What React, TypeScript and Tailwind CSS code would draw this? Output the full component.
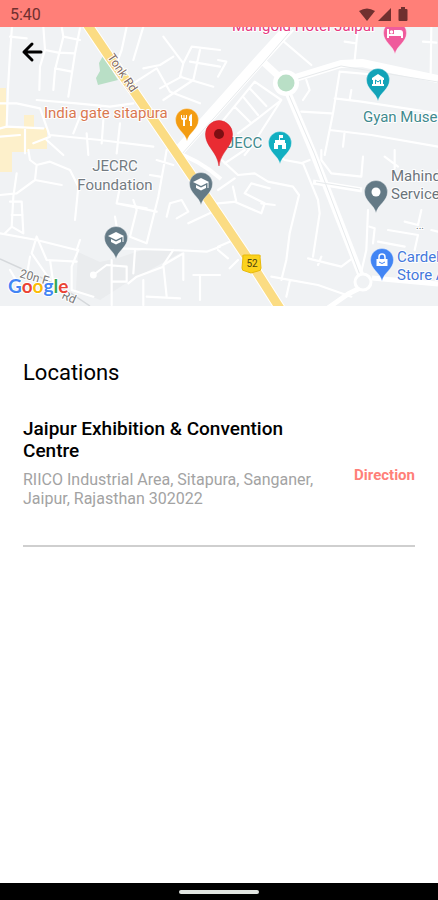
import type { ReactNode } from "react";

const FONT = "font-[Roboto,'Liberation_Sans',sans-serif]";

function StatusBar() {
  return (
    <header className="flex h-[27px] items-center justify-between bg-[#ff7f78] pt-0.5 pr-[29px] pl-[10px] text-[#70302f]">
      <span className="text-base leading-5">5:40</span>
      <svg className="h-4 w-[50px]" viewBox="0 0 50 16" fill="#70302f" aria-hidden="true">
        <path d="M0 4Q8-1 16 4L8 14Z" />
        <path d="M32 1V14H19Z" />
        <path d="M42 0h4v2h1.500q1 0 1 1v10q0 1-1 1h-7q-1 0-1-1V3q0-1 1-1H42z" />
      </svg>
    </header>
  );
}

function Pin({ x, y, color, children }: { x: number; y: number; color: string; children?: ReactNode }) {
  return (
    <g transform={`translate(${x} ${y})`}>
      <path
        d="M0 21C-1.500 13-11.500 9-11.500 0A11.500 11.500 0 1 1 11.500 0C11.500 9 1.500 13 0 21Z"
        fill={color}
        stroke="#fff"
        strokeOpacity=".5"
        strokeWidth=".7"
      />
      {children}
    </g>
  );
}

function Cap() {
  return (
    <path d="M-8-2 0-6 8-2 0 2ZM-5 1 0 3.500 5 1V4L0 6.500-5 4ZM6.500-2H7.500V4H6.500Z" fill="#fff" />
  );
}

function MapView() {
  return (
    <svg
      className="block h-[279px] w-full"
      viewBox="0 27 438 279"
      preserveAspectRatio="xMidYMid slice"
      role="img"
      aria-label="Map of Sitapura, Jaipur"
      fontFamily="Roboto, 'Liberation Sans', sans-serif"
    >
      <rect y="27" width="438" height="279" fill="#f0f2f4" />
      <path d="M0 88H6V128H24V115H34V128H47V149H28V152H12V172H0Z" fill="#fdf0cb" />
      <path d="M78 252 100 262 118 258 148 248 182 252 150 270 134 278 100 300 76 290Z" fill="#eaecee" />
      <path d="M103 56 118 80 98 85 96 78 100 71 99 63Z" fill="#b9dfc6" />

      <g fill="none" stroke="#fff" strokeWidth="6.500" strokeLinejoin="round" strokeLinecap="round">
        <g transform="scale(.33333)">
          <path d="M36 80 30 160 24 265 20 380 0 385M30 110 80 115M130 80 135 150 120 200 118 270M135 150 175 158 225 160M185 80 190 110 165 210 160 270M190 110 240 120M165 205 215 215M240 85 225 160 205 290M110 300 230 310 330 320 400 310M380 80 365 150 350 190M430 80 400 180" />
          <path d="M400 250 470 205 510 275 600 310M430 205 480 195 520 170M490 110 550 190 575 140 660 150M550 190 540 230 640 260M600 150 580 240 490 300M570 185 660 200M545 230 480 265" />
          <path d="M0 310 50 310 120 325 150 410 100 430M20 380 130 385M75 385 75 460M150 405 300 420 460 440M240 350 220 400M310 360 305 430M360 370 350 460M140 420 190 465M260 400 265 465M0 410 60 405" />
        </g>
        <g transform="translate(218 0) scale(.33333)">
          <path d="M180 110 280 195M420 80 410 180M380 125 415 130M640 80 638 220M615 125 655 128M0 180 25 185 0 230M0 380 110 245 190 300 100 370 60 400M50 320 100 370M75 290 120 345M95 265 145 318M265 240 275 270 255 300M365 215 345 340 320 465M365 215 480 225M350 295 430 305 660 340M400 270 395 300M250 335 340 340M335 390 460 405 660 440M380 395 375 440M190 300 100 440 80 465" />
        </g>
        <g transform="translate(0 150) scale(.33333)">
          <path d="M85 0 90 30 110 45 105 90 50 130 0 135M110 45 150 35 210 60 235 110 225 210M105 90 185 105M50 70 40 140 35 230 70 250 65 155 30 155M35 195 68 195M35 230 15 250M0 250 110 270 230 300 240 270M110 260 95 310 150 390M110 260 140 330 230 335M400 150 410 180 390 260 440 280 475 140 500 0M350 160 470 185M360 110 350 160 440 175M470 30 520 45M480 80 450 75M500 200 510 160 545 150 565 185 530 205M565 220 650 180M345 200 350 230M350 295 520 300 620 305 660 290M520 300 490 345 500 440M490 345 550 310 550 390M335 330 335 465M280 375 320 345 380 350 380 395 335 395M490 350 410 380 385 400M430 390 430 465M440 440 540 445M235 300 215 350 215 420 280 440M405 300 400 370M30 360 60 410M90 320 80 380M150 330 160 400M580 375 660 375M600 375 600 450" />
          <circle cx="280" cy="375" r="7" fill="#fff" />
        </g>
        <g transform="translate(218 150) scale(.33333)">
          <path d="M0 20 60 75 110 70 150 95 225 110 243 135 215 250 205 330 190 390M80 0 20 40M160 0 200 30 255 40 300 150 305 190 285 320M250 40 275 30M310 0 310 30 340 70 430 80M435 20 430 80M0 120 50 85M45 110 55 155 0 160M50 155 130 190 140 160 80 130 100 100 155 115M130 160 170 165M270 325 370 350 410 320M310 320 300 345M160 380 300 405 400 440M450 180 445 300 430 365M455 230 470 235 465 280M510 240 600 255 590 300M560 215 600 225 610 180M480 275 560 290M640 240 660 245M540 50 500 20M530 0 530 55M0 290 35 275M0 300 30 325M60 330 35 355M215 395 205 440" />
        </g>
      </g>

      <g fill="none" stroke="#fff" strokeLinejoin="round">
        <path d="M178 152 260 60 290 27" strokeWidth="11" />
        <path d="M260 59 286 83" strokeWidth="7" />
        <path d="M292 79 341 64 362 63 438 79" strokeWidth="8" />
        <path d="M286 88 312 150 362 278" strokeWidth="7" />
        <path d="M313 182 362 190M360 288 348 294 328 308M372 278 438 284" strokeWidth="5" />
        <path d="M174 152 Q198 159 221 179" strokeWidth="4" />
        <g stroke="#e7eaec" strokeWidth="1">
          <path d="M181 155 263 63 294 27M288 93 314 153 360 275M298 79 341 66 438 82M316 182 360 189" />
        </g>
      </g>
      <circle cx="286" cy="83" r="13" fill="#fff" />
      <circle cx="286" cy="83" r="8.500" fill="#b9dfc6" />
      <circle cx="363" cy="282" r="8" fill="#f0f2f4" stroke="#fff" strokeWidth="3" />
      <path d="M0 259 40 277 66 290 90 306" fill="none" stroke="#d5d8db" strokeWidth="1.500" />
      <path d="M87 24 110 58 133 90 153 119 175 151 220 217 251 263 281 310" fill="none" stroke="#fff" strokeWidth="11" />
      <path d="M87 24 110 58 133 90 153 119 175 151 220 217 251 263 281 310" fill="none" stroke="#fbdc83" strokeWidth="9" />

      <path d="M243 257Q242 255 244 255H259Q261 255 260 257L261 268Q261 271 258 271L251 273 245 271Q242 271 242 268Z" fill="#fbd21c" stroke="#e8b90b" />
      <text x="252" y="267" fontSize="10" textAnchor="middle" fill="#4d4410">52</text>

      <g stroke="#fff" strokeWidth="2" paintOrder="stroke" strokeLinejoin="round" fontSize="15">
        <text transform="translate(107 57) rotate(56)" fontSize="12" fill="#806b62">Tonk Rd</text>
        <text transform="translate(19 277) rotate(16)" fontSize="12" fill="#777">20n F</text>
        <text transform="translate(61 298) rotate(24)" fontSize="12" fill="#777">Rd</text>
        <text x="44" y="118" fill="#d9784f">India gate sitapura</text>
        <g fill="#737b82" textAnchor="middle">
          <text x="115" y="171">JECRC</text>
          <text x="115" y="190">Foundation</text>
        </g>
        <text x="232" y="31" fill="#e6397f">Marigold Hotel Jaipur</text>
        <text x="363" y="122" fill="#3f8a8e">Gyan Museum</text>
        <text x="226" y="148" fill="#3f8a8e">JECC</text>
        <g fill="#6b747b">
          <text x="391" y="181">Mahindra</text>
          <text x="391" y="199">Service</text>
          <text x="416" y="229" fontSize="10">...</text>
        </g>
        <g fill="#4478dc">
          <text x="397" y="262">Cardekho</text>
          <text x="397" y="280">Store Auto</text>
        </g>
      </g>

      <Pin x={187} y={120} color="#f39c12">
        <path d="M-6-5V-2Q-6 0-4 0V6H-2V0Q0 0 0-2V-5H-1V-2H-2.500V-5H-3.500V-2H-5V-5ZM5-6Q1-5 2 1H3V6H5Z" fill="#fff" />
      </Pin>
      <Pin x={201} y={184} color="#647a86"><Cap /></Pin>
      <Pin x={116} y={238} color="#647a86"><Cap /></Pin>
      <Pin x={280} y={143} color="#12afc1">
        <path d="M-1-8H3V-5H0V-3H5V0H6V6H2V2H-2V6H-6V0H-5V-3H-1Z" fill="#fff" />
      </Pin>
      <Pin x={378} y={80} color="#12a3b8">
        <path d="M0-6 6-2V0H5V4H6V6H-6V4H-5V0H-6V-2Z" fill="#fff" />
        <path d="M-2.500 4V0L0 2 2.500 0V4" fill="none" stroke="#12a3b8" />
      </Pin>
      <Pin x={395} y={33} color="#ef5b9c">
        <path d="M-8-4H-6V1H-1V-3H5Q8-3 8 0V5H6V3H-6V5H-8Z" fill="#fff" />
        <circle cx="-3.500" cy="-1" r="1.700" fill="#fff" />
      </Pin>
      <Pin x={376} y={192} color="#647a86"><circle r="4.500" fill="#fff" /></Pin>
      <Pin x={382} y={260} color="#4285f4">
        <path d="M-5.500-1H5.500V6H-5.500Z" fill="#fff" />
        <path d="M-3 0V-3Q-3-6 0-6T3-3V0" fill="none" stroke="#fff" strokeWidth="1.500" />
        <path d="M-3 2Q0 5 3 2" fill="none" stroke="#4285f4" />
      </Pin>
      <path d="M219 166C217 151 205.500 147 205.500 134A13.500 13.500 0 0 1 232.500 134C232.500 147 221 151 219 166Z" fill="#e92c33" stroke="#d81f28" strokeWidth=".5" />
      <circle cx="219" cy="134" r="5" fill="#7d0f13" />

      <text x="8" y="293" fontSize="19" fontWeight="700" fontFamily="Lato, sans-serif" stroke="#fff" strokeWidth="2" paintOrder="stroke" strokeLinejoin="round">
        <tspan fill="#4285f4">G</tspan>
        <tspan fill="#ea4335">o</tspan>
        <tspan fill="#fbbc05">o</tspan>
        <tspan fill="#4285f4">g</tspan>
        <tspan fill="#34a853">l</tspan>
        <tspan fill="#ea4335">e</tspan>
      </text>
    </svg>
  );
}

export default function App() {
  return (
    <div className={`flex min-h-screen flex-col bg-white text-black ${FONT}`}>
      <StatusBar />
      <main className="flex-1">
        <div className="relative">
          <MapView />
          <button type="button" aria-label="Back" className="absolute top-3 left-5 flex h-6 w-6 items-center justify-center">
            <svg className="h-6 w-6" viewBox="0 0 24 24" fill="none" stroke="#000" strokeWidth="3" strokeLinecap="round" strokeLinejoin="round">
              <path d="M21 13H4M12 5 4 13 12 21" />
            </svg>
          </button>
        </div>
        <section className="px-[23px] pt-[53px]">
          <h1 className="text-[22px] leading-7">Locations</h1>
          <article className="mt-[31px] flex items-center justify-between gap-4 border-b-2 border-[#cfcfcf] pb-[37px]">
            <div className="w-[296px]">
              <h2 className="text-[19px] leading-[22px] font-medium">Jaipur Exhibition &amp; Convention Centre</h2>
              <p className="mt-2 text-base leading-[19px] text-[#a3a3a3]">
                RIICO Industrial Area, Sitapura, Sanganer, Jaipur, Rajasthan 302022
              </p>
            </div>
            <a href="#direction" className="mt-6 text-[15px] leading-5 font-bold text-[#ff7f78]">Direction</a>
          </article>
        </section>
      </main>
      <footer className="flex h-[17px] items-center justify-center bg-black">
        <span className="h-1 w-20 rounded-full bg-[#e2e6e2]" />
      </footer>
    </div>
  );
}
